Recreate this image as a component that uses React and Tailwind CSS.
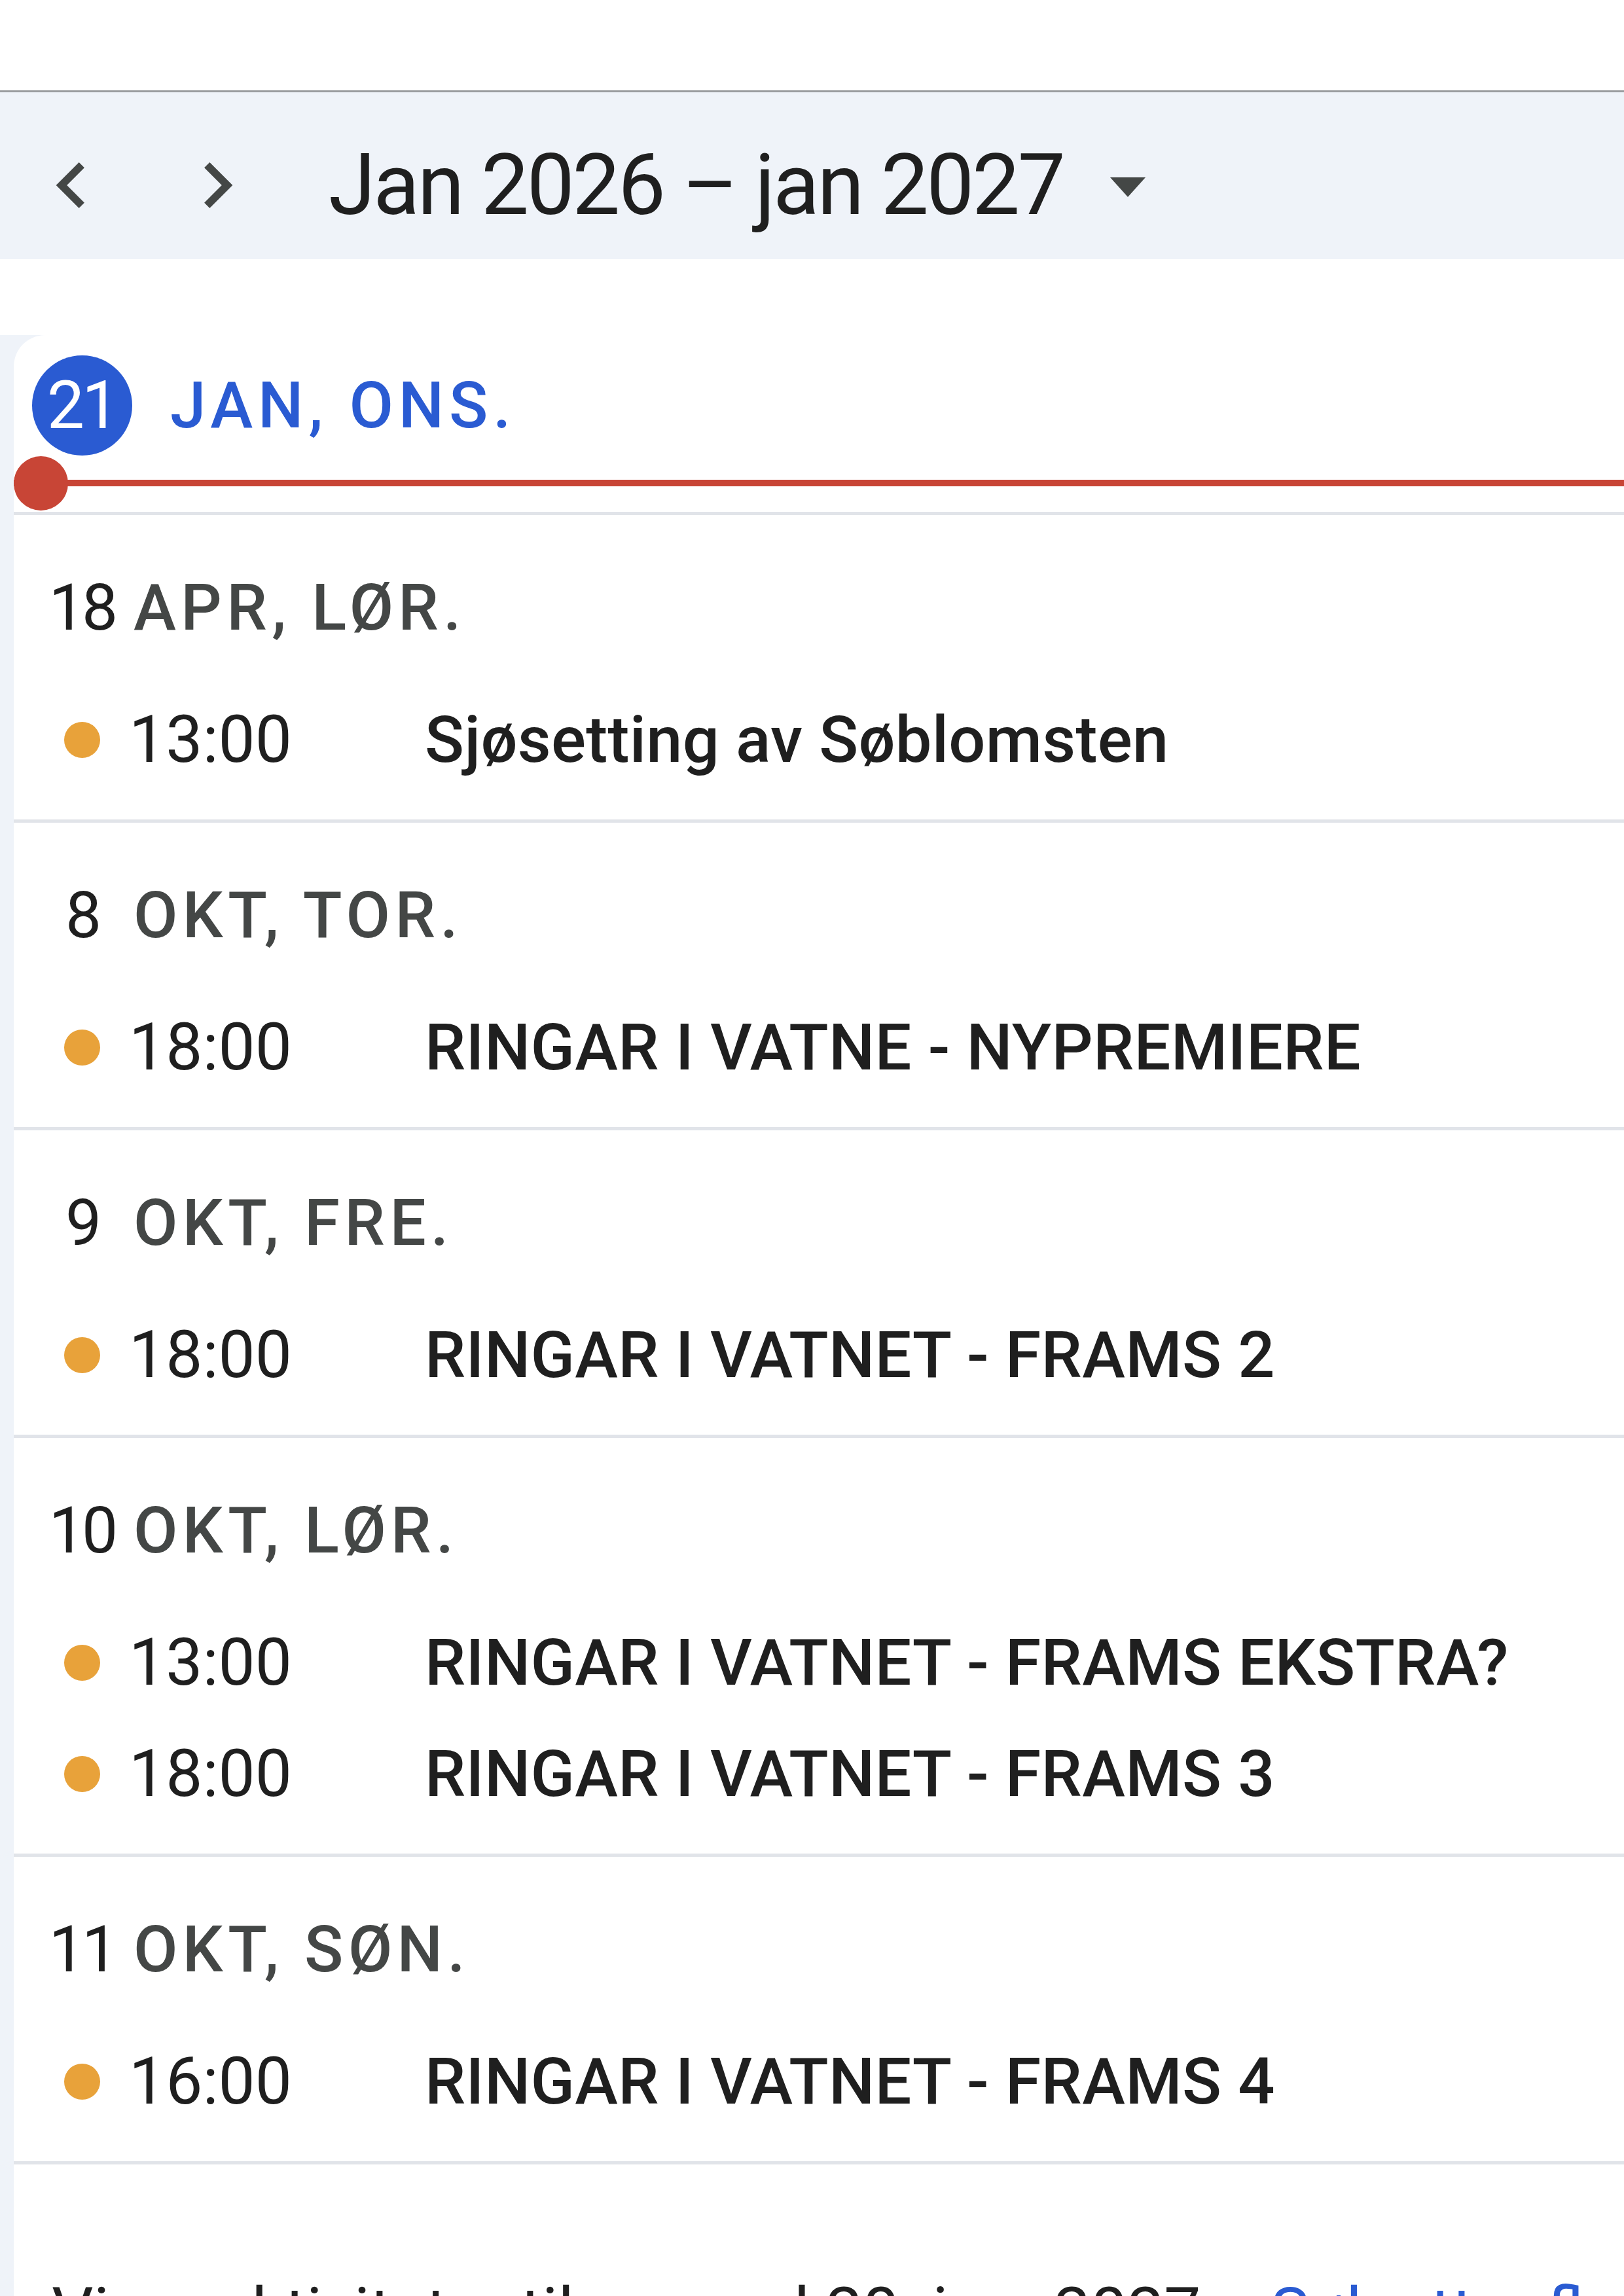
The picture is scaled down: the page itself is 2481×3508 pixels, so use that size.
import React from 'react';

const days = [
  { day: '18', label: 'APR, LØR.', events: [{ time: '13:00', title: 'Sjøsetting av Søblomsten' }] },
  { day: '8', label: 'OKT, TOR.', events: [{ time: '18:00', title: 'RINGAR I VATNE - NYPREMIERE' }] },
  { day: '9', label: 'OKT, FRE.', events: [{ time: '18:00', title: 'RINGAR I VATNET - FRAMS 2' }] },
  {
    day: '10',
    label: 'OKT, LØR.',
    events: [
      { time: '13:00', title: 'RINGAR I VATNET - FRAMS EKSTRA?' },
      { time: '18:00', title: 'RINGAR I VATNET - FRAMS 3' },
    ],
  },
  { day: '11', label: 'OKT, SØN.', events: [{ time: '16:00', title: 'RINGAR I VATNET - FRAMS 4' }] },
];

const Separator = () => <div className="h-[5px] bg-[#e1e4e9]" />;

const DaySection = ({ day, label, events }) => (
  <div>
    <div className="pt-[81px] pb-[37px] pl-[25px]">
      {/* date header */}
      <div className="flex h-[120px] items-center">
        <div className="w-[158px] text-center text-[98px] tracking-[-0.05em] text-[#1f1f1f]">{day}</div>
        <div className="text-[98px] font-medium tracking-[0.075em] text-[#444746]">{label}</div>
      </div>
      <div className="mt-[57px]">
        {events.map((ev, i) => (
          <div key={i} className="flex h-[170px] items-center">
            <div className="flex w-[158px] justify-center">
              <span className="block h-[55px] w-[55px] rounded-full bg-[#e8a23a]" />
            </div>
            <div className="-ml-[7px] w-[452px] text-[100px] text-[#1f1f1f]">{ev.time}</div>
            <div className="whitespace-nowrap text-[99px] font-medium tracking-[0.003em] text-[#1f1f1f]">{ev.title}</div>
          </div>
        ))}
      </div>
    </div>
    <Separator />
  </div>
);

const App = () => {
  return (
    <div
      className="h-[3508px] w-[2481px] overflow-hidden bg-white"
      style={{ fontFamily: 'Roboto, "Noto Sans", sans-serif' }}
    >
      <div className="h-[138px] bg-white" />
      <div className="h-[3px] bg-[#9a9c9f]" />

      {/* top navigation band */}
      <div className="flex h-[255px] items-center bg-[#eff3f9] pt-[28px]">
        <svg viewBox="0 0 24 24" className="ml-[39px] h-[140px] w-[140px]" fill="#444746">
          <path d="M15.41 7.41 14 6l-6 6 6 6 1.41-1.41L10.83 12z" />
        </svg>
        <svg viewBox="0 0 24 24" className="ml-[83px] h-[140px] w-[140px]" fill="#444746">
          <path d="M10 6 8.59 7.41 13.17 12l-4.58 4.59L10 18l6-6z" />
        </svg>
        <div className="ml-[100px] whitespace-nowrap text-[130px] leading-none tracking-[-0.026em] text-[#1f1f1f]">
          Jan 2026 – jan 2027
        </div>
        <svg viewBox="0 0 54 30" className="ml-[72px] mt-[6px] h-[30px] w-[54px]">
          <polygon points="0,0 54,0 27,30" fill="#444746" />
        </svg>
      </div>

      <div className="h-[116px] bg-white" />

      <div className="bg-[#eff3f9] pl-[21px]">
        <div className="rounded-tl-[48px] bg-white">
          {/* today */}
          <div className="pt-[31px]">
            <div className="flex items-center pl-[25px]">
              <div className="flex w-[158px] justify-center">
                <div className="flex h-[153px] w-[153px] items-center justify-center rounded-full bg-[#2a5bd2] text-[102px] tracking-[-0.04em] text-white">
                  21
                </div>
              </div>
              <div className="ml-[56px] text-[98px] font-medium tracking-[0.08em] text-[#2a5bd2]">JAN, ONS.</div>
            </div>
            <div className="relative mt-[37px] h-[10px] bg-[#c84536]">
              <span className="absolute left-0 top-[-36px] h-[83px] w-[83px] rounded-full bg-[#c84536]" />
            </div>
            <div className="h-[39px]" />
          </div>
          <Separator />

          {days.map((d, i) => (
            <DaySection key={i} {...d} />
          ))}

          <div className="whitespace-nowrap pl-[58px] pt-[150px] text-[100px] text-[#1f1f1f]">
            Viser aktiviteter til og med 20. jan. 2027.
            <span className="ml-[80px] text-[#2a5bd2]">Søk etter flere</span>
          </div>
        </div>
      </div>
    </div>
  );
};

export default App;
